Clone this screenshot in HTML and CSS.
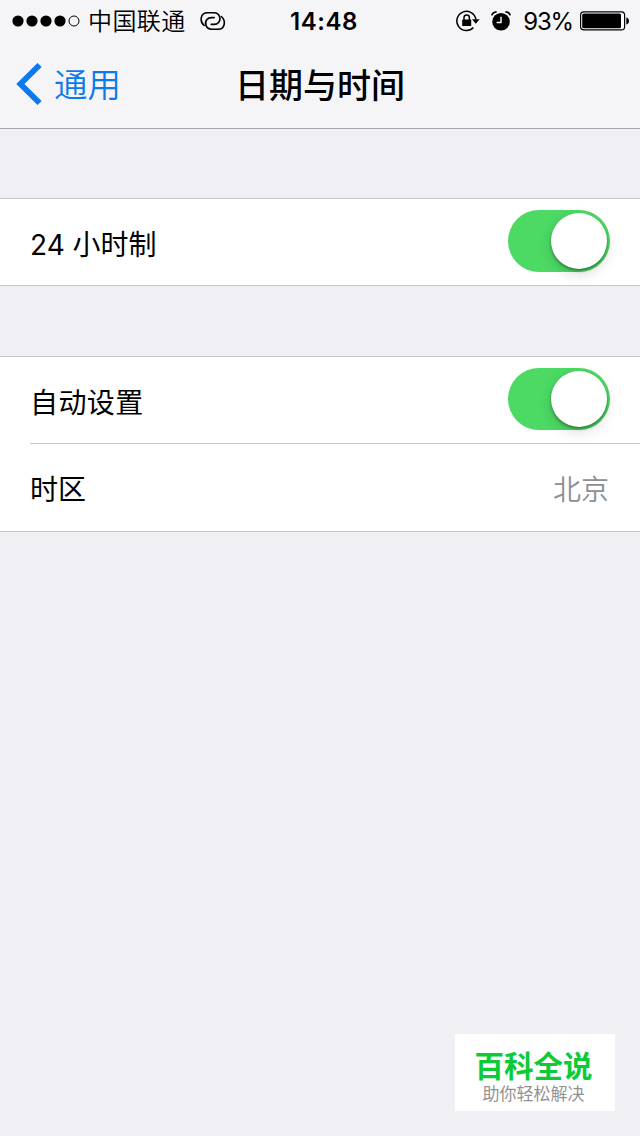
FILE: index.html
```html
<!DOCTYPE html>
<html lang="zh-CN">
<head>
<meta charset="utf-8">
<title>日期与时间</title>
<link rel="stylesheet" href="styles.css">
</head>
<body>
<header class="top">
  <div class="status">
    <div class="status-left">
      <svg class="signal" width="68" height="12" viewBox="0 0 68 12"><circle cx="6" cy="6" r="5.6"/><circle cx="20" cy="6" r="5.6"/><circle cx="34" cy="6" r="5.6"/><circle cx="48" cy="6" r="5.6"/><circle cx="62" cy="6" r="5" fill="none" stroke="#000"/></svg>
      <span class="carrier">中国联通</span>
      <svg class="link" width="26" height="20" viewBox="0 0 26 20" fill="none" stroke="#000" stroke-width="1.600" stroke-linecap="round"><path d="M4.200 14.500C-.6 10.500.2 1.800 7.500 1.800H14c5.600 0 7.400 6.200 4.600 9.600-1.100 1.400-2.400 2-4.600 2h-2.800"/><path d="M21.300 5.500c4.800 4 4 12.700-3.300 12.700h-6.500c-5.600 0-7.400-6.200-4.600-9.600 1.100-1.400 2.400-2 4.600-2h2.800"/></svg>
    </div>
    <div class="clock">14:48</div>
    <div class="status-right">
      <svg class="lock" width="24" height="22" viewBox="0 0 24 22"><path d="M17.400 17.600A9.600 9.600 0 1 1 19.900 9.400" fill="none" stroke="#000" stroke-width="1.500"/><path d="M16 9.300h7.600l-3.800 4.500z"/><rect x="6.200" y="9.500" width="9" height="6.600" rx=".7"/><path d="M8 10V7.600a2.700 2.700 0 0 1 5.400 0V10" fill="none" stroke="#000" stroke-width="1.500"/></svg>
      <svg class="alarm" width="20" height="20" viewBox="0 0 20 20"><circle cx="10" cy="10.700" r="8.800"/><path d="M.8 4.400Q1.600 1.200 5.600.9M19.200 4.400Q18.400 1.200 14.400.9" fill="none" stroke="#000" stroke-width="1.700"/><path d="M10 5.800v5.600H5.600" fill="none" stroke="#f5f5f7" stroke-width="1.500"/></svg>
      <span class="percent">93%</span>
      <svg class="battery" width="50" height="20" viewBox="0 0 50 20"><rect x=".6" y=".9" width="44" height="18" rx="3.200" fill="#fff" stroke="#000" stroke-width="1.200"/><rect x="2.200" y="2.500" width="38.800" height="14.800" rx="1.600"/><path d="M46.300 6.600q2.700.6 2.700 3.400t-2.700 3.400z"/></svg>
    </div>
  </div>
  <nav class="nav">
    <a class="back"><svg width="26" height="42" viewBox="0 0 26 42" fill="none" stroke="#0b7bec" stroke-width="5.800"><path d="M23.600 2L4.400 21l19.200 19"/></svg><span>通用</span></a>
    <h1 class="title">日期与时间</h1>
  </nav>
</header>
<main>
  <section class="group">
    <div class="row"><span class="label">24 小时制</span><span class="switch"><i class="knob"></i></span></div>
  </section>
  <section class="group">
    <div class="row"><span class="label label-wide">自动设置</span><span class="switch"><i class="knob"></i></span></div>
    <div class="row row-divided"><span class="label">时区</span><span class="label value">北京</span></div>
  </section>
</main>
<aside class="brand"><strong>百科全说</strong><span>助你轻松解决</span></aside>
</body>
</html>
```
FILE: styles.css
```css
* { box-sizing: border-box; }
body {
  margin: 0;
  width: 640px;
  height: 1136px;
  overflow: hidden;
  position: relative;
  background: #efeff4;
  color: #000;
  font-family: Inter, "Noto Sans CJK SC", sans-serif;
}
svg { display: block; flex: none; }
.top { height: 129px; background: #f5f5f7; border-bottom: 1px solid #a8a8ac; }
.status {
  height: 40px;
  display: grid;
  grid-template-columns: 1fr auto 1fr;
  align-items: center;
  padding: 0 10px 0 13px;
  line-height: 40px;
  white-space: nowrap;
}
.status-left, .status-right { display: flex; align-items: center; }
.status-right { justify-content: flex-end; }
.signal { margin-left: -1px; }
.carrier { margin-left: 8px; padding-top: 2px; font-size: 24px; font-weight: 350; letter-spacing: .4px; }
.link { margin-left: 14px; }
.clock { padding: 1px 0 0 5px; font-size: 24px; font-weight: 600; letter-spacing: .6px; }
.lock { margin-right: 11px; }
.alarm { margin-right: 12px; }
.percent { padding-top: 1px; font-size: 24px; letter-spacing: -1.2px; margin-right: 7px; }
.nav {
  height: 88px;
  display: grid;
  grid-template-columns: 1fr auto 1fr;
  align-items: center;
  padding: 0 16px;
}
.back { display: flex; align-items: center; gap: 12px; color: #0b7bec; font-size: 33.5px; line-height: 42px; }
.back span { padding-top: 2px; font-weight: 350; }
.title { margin: 0; padding-top: 3px; font-size: 34px; font-weight: 500; line-height: 42px; }
.group { margin-top: 69px; background: #fff; border-top: 1px solid #c8c7cc; border-bottom: 1px solid #c8c7cc; }
.group + .group { margin-top: 70px; }
.row {
  height: 86px;
  display: flex;
  align-items: center;
  justify-content: space-between;
  padding-right: 30px;
  margin-left: 30px;
  font-size: 28px;
  line-height: 40px;
}
.row-divided { height: 88px; border-top: 1px solid #c8c7cc; }
.label { padding-top: 5px; font-weight: 400; }
.label-wide { letter-spacing: .4px; }
.value { color: #8e8e93; padding-right: 1px; font-weight: 350; }
.switch { width: 102px; height: 62px; border-radius: 31px; background: #4cd964; padding: 3px; display: flex; justify-content: flex-end; margin-top: -2px; }
.knob { width: 56px; height: 56px; border-radius: 50%; background: #fff; box-shadow: 0 2px 3px rgba(0,0,0,.35), 0 5px 14px rgba(0,0,0,.14); }
.brand {
  position: absolute;
  left: 455px;
  top: 1034px;
  width: 160px;
  height: 77px;
  background: #fff;
  display: flex;
  flex-direction: column;
  align-items: center;
  padding: 16px 3px 0 0;
}
.brand strong { font-size: 29.5px; line-height: 33px; font-weight: 700; color: #0dcb37; }
.brand span { font-size: 17px; line-height: 22px; color: #929292; }
```
